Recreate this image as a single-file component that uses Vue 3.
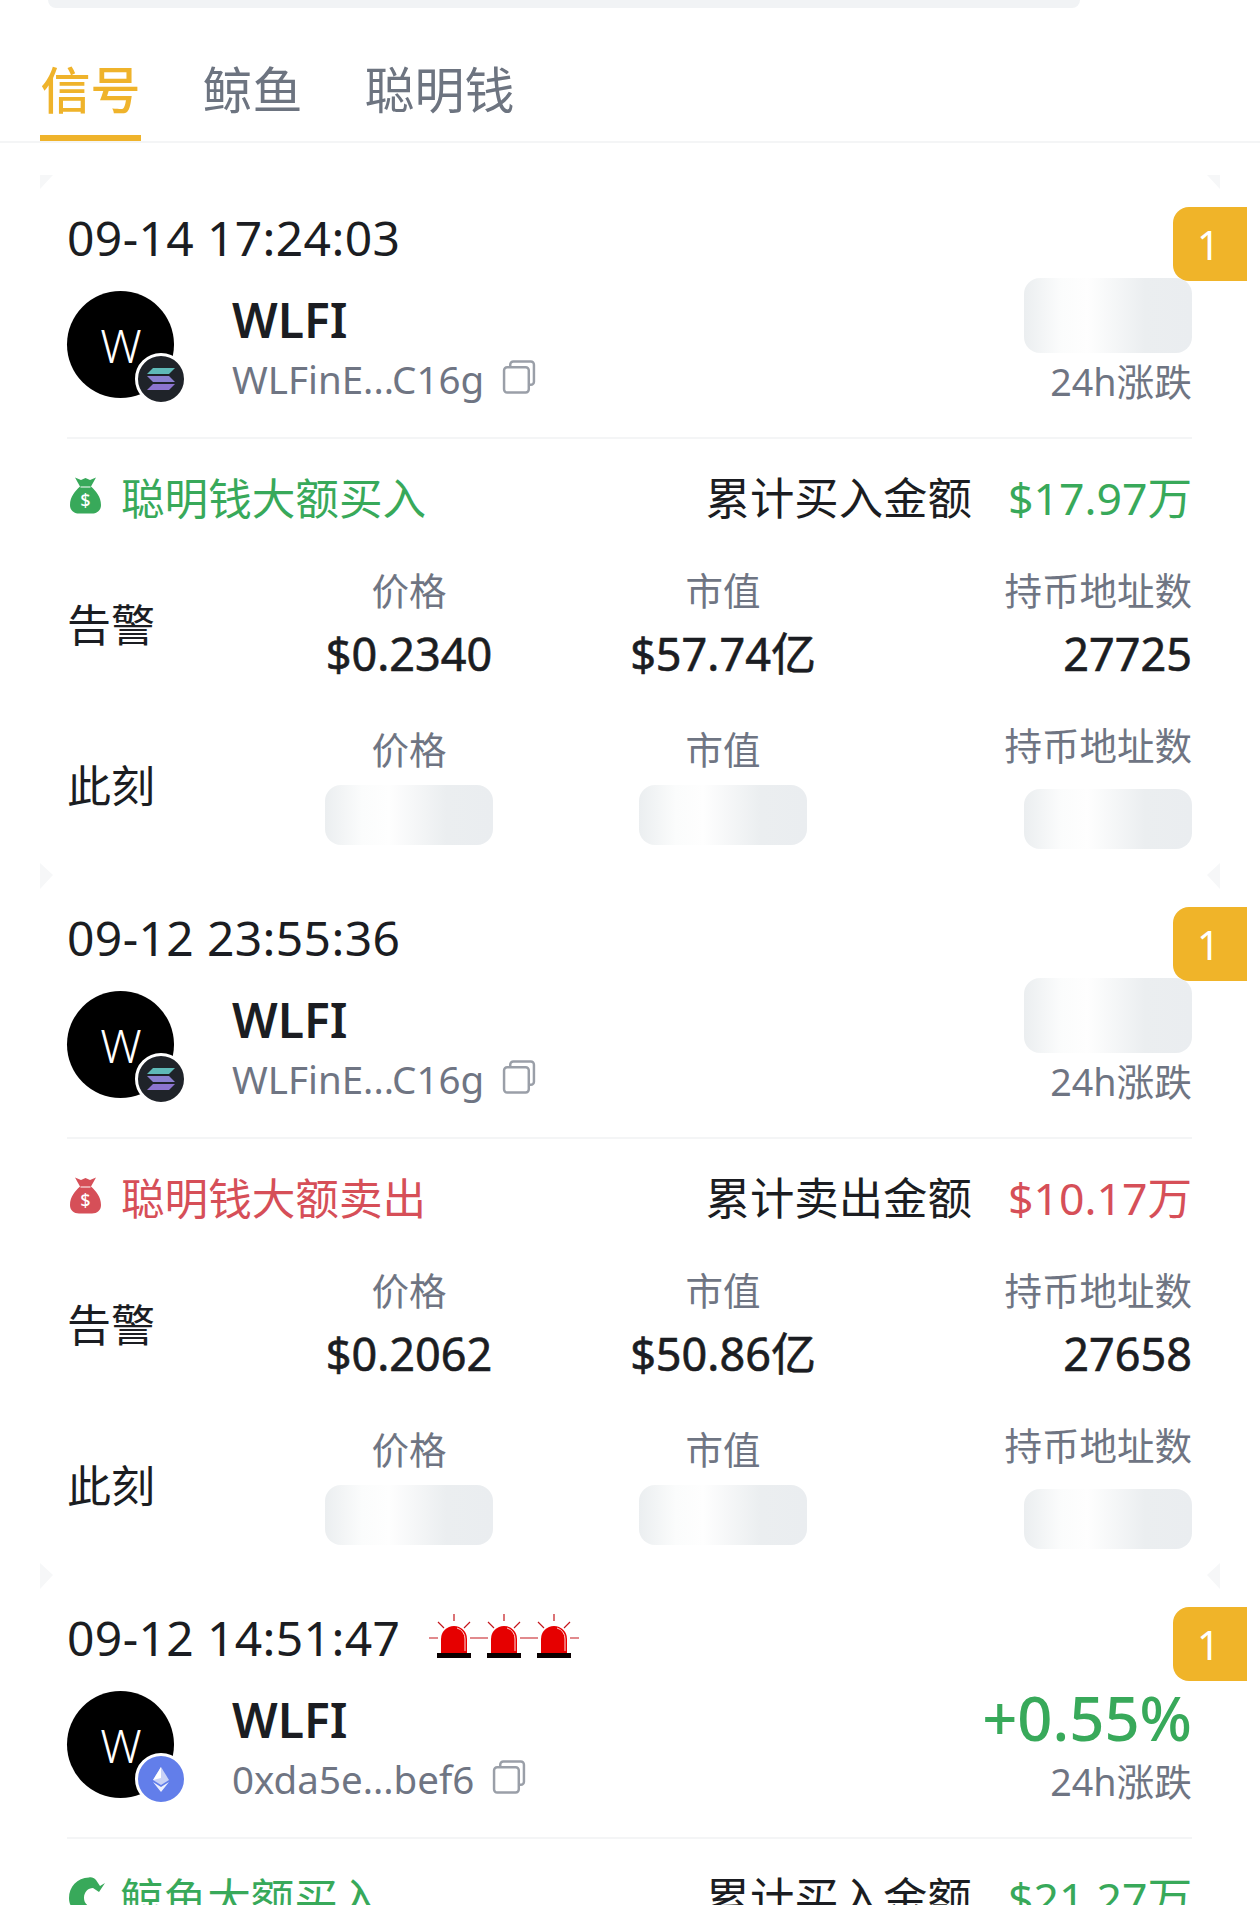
<script setup>
const tabs = ['信号', '鲸鱼', '聪明钱']
const cards = [
  { time: '09-14 17:24:03', addr: 'WLFinE...C16g', chain: 'sol', type: 'bag', tone: 'up', title: '聪明钱大额买入', sumLabel: '累计买入金额', sum: '$17.97万', price: '$0.2340', cap: '$57.74亿', holders: '27725' },
  { time: '09-12 23:55:36', addr: 'WLFinE...C16g', chain: 'sol', type: 'bag', tone: 'down', title: '聪明钱大额卖出', sumLabel: '累计卖出金额', sum: '$10.17万', price: '$0.2062', cap: '$50.86亿', holders: '27658' },
  { time: '09-12 14:51:47', addr: '0xda5e...bef6', chain: 'eth', type: 'whale', tone: 'up', sirens: 3, change: '+0.55%', title: '鲸鱼大额买入', sumLabel: '累计买入金额', sum: '$21.27万', price: '', cap: '', holders: '' }
]
</script>

<template>
  <div class="page">
    <div class="search-edge"></div>
    <nav class="tabs">
      <span v-for="(t, i) in tabs" :key="t" class="tab" :class="{ active: i === 0 }">{{ t }}</span>
    </nav>
    <section v-for="c in cards" :key="c.time" class="card">
      <i class="nick tl"></i><i class="nick tr"></i><i class="nick bl"></i><i class="nick br"></i>
      <div class="rank">1</div>
      <div class="date-row">
        <span class="date">{{ c.time }}</span>
        <svg v-for="n in (c.sirens || 0)" :key="n" class="siren" viewBox="0 0 50 45" width="50" height="45">
          <g stroke="#c4161c" stroke-width="1.2">
            <path d="M0 25H9M41 25H50M25 1V8M9 9L15 15M41 9L35 15" fill="none" />
          </g>
          <path d="M12 40V26A13 13 0 0 1 38 26V40Z" fill="#e60000" />
          <path d="M28 15A11 11 0 0 1 36 26V38" fill="none" stroke="#ffd9d9" stroke-width="1" />
          <rect x="8" y="40" width="34" height="5" fill="#0a0000" />
        </svg>
      </div>
      <div class="token">
        <div class="avatar">
          W
          <span class="chain" :class="c.chain">
            <svg v-if="c.chain === 'sol'" viewBox="0 0 46 46" width="46" height="46">
              <path d="M15 12H37L31 18H9Z" fill="#5fb9b8" />
              <path d="M9 20H31L37 26H15Z" fill="#8a7fd0" />
              <path d="M15 28H37L31 34H9Z" fill="#8d74cf" />
            </svg>
            <svg v-else viewBox="0 0 46 46" width="46" height="46">
              <path d="M23 11L15 24L23 29L31 24Z" fill="#c9d2f6" />
              <path d="M23 11V22L15 24Z" fill="#fff" />
              <path d="M15 26L23 36L31 26L23 31Z" fill="#eef1fd" />
            </svg>
          </span>
        </div>
        <div class="token-info">
          <div class="name">WLFI</div>
          <div class="addr">
            <span>{{ c.addr }}</span>
            <svg class="copy" viewBox="0 0 33 33" width="34" height="34" fill="none" stroke="#9a9fa8" stroke-width="2.4">
              <path d="M8 6V4.5A3 3 0 0 1 11 1.5H28A3 3 0 0 1 31 4.5V21A3 3 0 0 1 28 24H26" />
              <rect x="2" y="7" width="24" height="24.5" rx="3" />
            </svg>
          </div>
        </div>
        <div class="change">
          <div v-if="c.change" class="change-value">{{ c.change }}</div>
          <div v-else class="mask"></div>
          <div class="change-label">24h涨跌</div>
        </div>
      </div>
      <div class="signal" :class="c.tone">
        <svg v-if="c.type === 'bag'" class="sig-icon" viewBox="0 0 31 37" width="31" height="37">
          <path class="fill" d="M5 0.500L11 3L15.500 1L20 3L26 0.500L21 9.500C26 14 31 20 31 28C31 33.500 27 36.500 22 36.500H9C4 36.500 0 33.500 0 28C0 20 5 14 10 9.500Z" />
          <path d="M10.500 10H20.500" stroke="#fff" stroke-width="1" />
          <text x="15.500" y="29.500" text-anchor="middle" font-size="18" font-weight="500" fill="#fff">$</text>
        </svg>
        <svg v-else class="sig-icon whale" viewBox="0 0 36 37" width="36" height="37">
          <path class="fill" d="M20 0.500C8 1 0 10 0 21C0 29 5 35 13 37H30L36 32C24 33 15 29 15 21C15 15 19 11 24 11L30 15L36 6L31 9L27 3C25 1 23 0 20 0.500Z" />
          <path d="M3 30C9 34 13 27 19 31C24 34 28 31 33 33" fill="none" stroke="#fff" stroke-width="1" />
        </svg>
        <span class="sig-title">{{ c.title }}</span>
        <span class="sum-label">{{ c.sumLabel }}</span>
        <span class="sum">{{ c.sum }}</span>
      </div>
      <div class="stats">
        <div class="row-label">告警</div>
        <div class="col col-price"><span class="label">价格</span><span class="value">{{ c.price }}</span></div>
        <div class="col col-cap"><span class="label">市值</span><span class="value">{{ c.cap }}</span></div>
        <div class="col col-hold"><span class="label">持币地址数</span><span class="value">{{ c.holders }}</span></div>
      </div>
      <div class="stats now">
        <div class="row-label">此刻</div>
        <div class="col col-price"><span class="label">价格</span><span class="mask small"></span></div>
        <div class="col col-cap"><span class="label">市值</span><span class="mask small"></span></div>
        <div class="col col-hold hold-now"><span class="label">持币地址数</span><span class="mask small"></span></div>
      </div>
    </section>
  </div>
</template>

<style>
html, body { margin: 0; background: #fff; overflow: hidden; }
</style>

<style scoped>
.page {
  width: 1260px;
  height: 1905px;
  overflow: hidden;
  background: #fff;
  font-family: "Noto Sans", "Noto Sans CJK SC", sans-serif;
  color: #1b1d22;
}
.search-edge {
  height: 8px;
  margin: 0 180px 0 48px;
  background: #f1f3f5;
  border-radius: 0 0 18px 18px;
}
.tabs {
  display: flex;
  gap: 61px;
  padding: 49px 0 0 40px;
  border-bottom: 2px solid #f4f5f6;
}
.tab {
  padding: 0 0.5px 12px;
  font-size: 50px;
  line-height: 66px;
  color: #6d7480;
  border-bottom: 6px solid transparent;
}
.tab.active { color: #efb32b; border-bottom-color: #efb32b; font-weight: 500; }
.card {
  position: relative;
  box-sizing: border-box;
  width: 1180px;
  height: 700px;
  margin: 32px 0 -32px 40px;
  padding: 35px 28px 0 27px;
  background: #fff;
}
.card + .card { margin-top: 32px; }
.nick {
  position: absolute;
  width: 13px;
  height: 14px;
  background: #f6f7f8;
}
.nick.tl { left: 0; top: 0; clip-path: polygon(0 0, 100% 0, 0 100%); }
.nick.tr { right: 0; top: 0; clip-path: polygon(0 0, 100% 0, 100% 100%); }
.nick.bl { left: 0; bottom: -12px; height: 24px; clip-path: polygon(0 0, 100% 50%, 0 100%); }
.nick.br { right: 0; bottom: -12px; height: 24px; clip-path: polygon(100% 0, 0 50%, 100% 100%); }
.rank {
  position: absolute;
  top: 32px;
  right: -27px;
  width: 74px;
  height: 74px;
  box-sizing: border-box;
  padding-right: 3px;
  display: flex;
  align-items: center;
  justify-content: center;
  background: #f0b429;
  border-radius: 16px 0 0 16px;
  color: #fff;
  font-size: 40px;
  z-index: 1;
}
.date-row { display: flex; height: 56px; }
.date { font-size: 48px; line-height: 56px; letter-spacing: 0.36px; margin-right: 29px; white-space: nowrap; }
.siren { flex: none; margin-top: 3px; }
.token {
  display: flex;
  height: 146px;
  margin-top: 25px;
  border-bottom: 2px solid #f4f5f6;
}
.avatar {
  position: relative;
  flex: none;
  width: 107px;
  height: 107px;
  border-radius: 50%;
  background: #000;
  color: #fff;
  font-size: 46px;
  font-weight: 300;
  line-height: 108px;
  text-align: center;
  text-indent: 1px;
}
.chain {
  position: absolute;
  right: -13px;
  bottom: -7px;
  width: 46px;
  height: 46px;
  border: 3px solid #fff;
  border-radius: 50%;
  background: #1f2329;
  display: flex;
  text-indent: 0;
}
.chain.eth { background: #627eea; }
.token-info { margin-left: 58px; padding-top: 1px; }
.name { font-size: 48px; font-weight: 600; line-height: 56px; }
.addr {
  display: flex;
  align-items: flex-start;
  gap: 18px;
  margin-top: 9px;
  font-size: 38.5px;
  line-height: 44px;
  color: #6f7583;
}
.copy { flex: none; margin-top: 3px; }
.change {
  margin-left: auto;
  margin-top: -13px;
  display: flex;
  flex-direction: column;
  align-items: flex-end;
}
.mask {
  display: block;
  width: 168px;
  height: 75px;
  border-radius: 16px;
  background: linear-gradient(90deg, #ebeef0 0%, #fbfcfc 22%, #fefefe 38%, #ebeef0 72%, #eaedf0 100%);
}
.mask.small { height: 60px; }
.change-value {
  margin-top: 3px;
  height: 72px;
  font-size: 61.5px;
  font-weight: 500;
  line-height: 72px;
  color: #38a95a;
  white-space: nowrap;
}
.change-label {
  margin-top: 7px;
  font-size: 37.7px;
  line-height: 44px;
  color: #6f7583;
}
.signal {
  display: flex;
  align-items: center;
  height: 60px;
  margin-top: 29px;
  font-size: 44px;
  line-height: 60px;
}
.sig-icon { flex: none; margin-left: 3px; margin-top: -6px; }
.sig-icon.whale { margin-right: -5px; margin-left: 2px; }
.sig-title { margin-left: 20px; font-size: 43.6px; }
.signal .fill { fill: #38a95a; }
.signal.down .fill { fill: #d64f58; }
.signal.up .sig-title, .signal.up .sum { color: #38a95a; }
.signal.down .sig-title, .signal.down .sum { color: #d64f58; }
.sum-label { margin-left: auto; font-size: 44.4px; }
.sum { margin-left: 36px; font-size: 44.6px; }
.stats {
  display: flex;
  align-items: center;
  margin-top: 39px;
}
.stats.now { margin-top: 40px; }
.row-label {
  flex: none;
  width: 258px;
  font-size: 44px;
  line-height: 60px;
}
.col {
  display: flex;
  flex-direction: column;
  align-items: center;
  flex: none;
  width: 168px;
}
.col-cap { margin-left: 146px; }
.col-hold { margin-left: auto; align-items: flex-end; width: auto; }
.label {
  font-size: 37.5px;
  line-height: 48px;
  color: #6f7583;
  white-space: nowrap;
}
.value {
  margin-top: 11px;
  font-size: 45px;
  font-weight: 400;
  -webkit-text-stroke: 0.6px #1b1d22;
  line-height: 56px;
  white-space: nowrap;
}
.now .mask { margin-top: 11px; }
.now .hold-now .mask { margin-top: 19px; }
</style>
